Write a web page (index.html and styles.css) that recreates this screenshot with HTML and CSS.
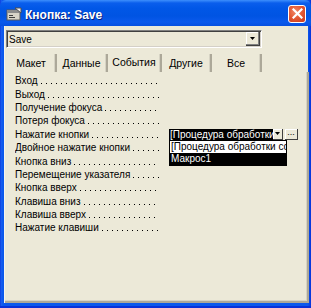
FILE: index.html
```html
<!DOCTYPE html>
<html lang="ru">
<head>
<meta charset="utf-8">
<title>Кнопка: Save</title>
<link rel="stylesheet" href="styles.css">
</head>
<body>
<div class="window">
  <div class="titlebar">
    <svg class="ticon" width="16" height="14" viewBox="0 0 16 14">
      <rect x="1" y="3" width="13" height="10" fill="#d8d4c8" stroke="#5a5a5a" stroke-width="1"/>
      <rect x="1" y="3" width="13" height="3" fill="#8c8c8c"/>
      <rect x="3" y="8" width="4" height="1" fill="#404040"/>
      <rect x="3" y="10" width="6" height="1" fill="#404040"/>
      <path d="M9 1 L15 1 L15 6 Z" fill="#f0f0f0" stroke="#505050" stroke-width="1"/>
    </svg>
    <span class="title">Кнопка: Save</span>
    <div class="close">
      <svg width="11" height="11" viewBox="0 0 11 11"><path d="M1.5 1.5 L9.5 9.5 M9.5 1.5 L1.5 9.5" stroke="#fff" stroke-width="2.2" stroke-linecap="square"/></svg>
    </div>
  </div>
  <div class="client">
    <div class="combo">
      <span class="combo-text">Save</span>
      <span class="combo-btn"><svg width="5" height="3" viewBox="0 0 5 3"><path d="M0 0 H5 L2.5 3 Z" fill="#000"/></svg></span>
    </div>
    <div class="tabs">
      <div class="tab t1">Макет</div>
      <div class="tab t2">Данные</div>
      <div class="tab t3 active">События</div>
      <div class="tab t4">Другие</div>
      <div class="tab t5">Все</div>
    </div>
    <div class="panel">
      <div class="row"><span class="lead"><span class="label">Вход</span><span class="dots"></span></span><span class="value"></span></div>
      <div class="row"><span class="lead"><span class="label">Выход</span><span class="dots"></span></span><span class="value"></span></div>
      <div class="row"><span class="lead"><span class="label">Получение фокуса</span><span class="dots"></span></span><span class="value"></span></div>
      <div class="row"><span class="lead"><span class="label">Потеря фокуса</span><span class="dots"></span></span><span class="value"></span></div>
      <div class="row"><span class="lead"><span class="label">Нажатие кнопки</span><span class="dots"></span></span>
        <span class="value">
          <span class="vcombo">
            <span class="vtext">[Процедура обработки событий]</span>
            <span class="vbtn"><svg width="5" height="3" viewBox="0 0 5 3"><path d="M0 0 H5 L2.5 3 Z" fill="#000"/></svg></span>
          </span>
          <span class="build">...</span>
          <span class="droplist">
            <span class="item">[Процедура обработки событий]</span>
            <span class="item sel">Макрос1</span>
          </span>
        </span>
      </div>
      <div class="row"><span class="lead"><span class="label">Двойное нажатие кнопки</span><span class="dots"></span></span><span class="value"></span></div>
      <div class="row"><span class="lead"><span class="label">Кнопка вниз</span><span class="dots"></span></span><span class="value"></span></div>
      <div class="row"><span class="lead"><span class="label">Перемещение указателя</span><span class="dots"></span></span><span class="value"></span></div>
      <div class="row"><span class="lead"><span class="label">Кнопка вверх</span><span class="dots"></span></span><span class="value"></span></div>
      <div class="row"><span class="lead"><span class="label">Клавиша вниз</span><span class="dots"></span></span><span class="value"></span></div>
      <div class="row"><span class="lead"><span class="label">Клавиша вверх</span><span class="dots"></span></span><span class="value"></span></div>
      <div class="row"><span class="lead"><span class="label">Нажатие клавиши</span><span class="dots"></span></span><span class="value"></span></div>
    </div>
  </div>
</div>
</body>
</html>
```
FILE: styles.css
```css
* { box-sizing: border-box; }
html, body { margin: 0; padding: 0; background: #fff; }
body { font-family: "Liberation Sans", Arial, sans-serif; font-size: 10px; color: #000; }

.window {
  width: 311px;
  height: 308px;
  display: flex;
  flex-direction: column;
  background: linear-gradient(to right, #0831d9 0, #1a5ef0 1px, #0a58ec 3px, #0a58ec calc(100% - 3px), #0831d9 100%);
  padding: 0 3px 5px 4px;
  box-shadow: inset 0 -2px 0 #0831d9;
}

.titlebar {
  height: 26px;
  margin: 0 -3px 0 -4px;
  padding: 0 5px 0 6px;
  display: flex;
  align-items: center;
  background: linear-gradient(#3d8ffc 0, #0a5eec 3px, #0157e7 8px, #0054e3 16px, #0a59ec 22px, #0650e0 26px);
  border-radius: 6px 6px 0 0;
}
.ticon { flex: none; margin-top: 1px; }
.title {
  margin-left: 3px;
  color: #fff;
  font-weight: bold;
  font-size: 12px;
  text-shadow: 1px 1px 0 #0a1e7a;
  flex: 1;
  padding-top: 3px;
}
.close {
  width: 18px;
  height: 18px;
  margin-top: 1px;
  border: 1px solid #fff;
  border-radius: 3px;
  background: radial-gradient(circle at 40% 35%, #f08a6a 0, #e45a35 45%, #c8361a 100%);
  display: flex;
  align-items: center;
  justify-content: center;
}

.client {
  flex: 1;
  background: #ece9d8;
  display: flex;
  flex-direction: column;
  padding-top: 4px;
  border-left: 1px solid #f5f4ee;
}

.combo {
  margin-left: 1px;
  width: 256px;
  height: 18px;
  display: flex;
  align-items: center;
  border-top: 1px solid #808080;
  border-left: 1px solid #808080;
  border-right: 1px solid #fff;
  border-bottom: 1px solid #fff;
  box-shadow: inset 1px 1px 0 #404040, inset -1px -1px 0 #d4d0c8;
}
.combo-text { flex: 1; padding-left: 2px; padding-top: 1px; }
.combo-btn {
  width: 14px;
  height: 14px;
  margin-right: 1px;
  display: flex;
  align-items: center;
  justify-content: center;
  border-right: 1px solid #404040;
  border-bottom: 1px solid #404040;
  box-shadow: inset -1px -1px 0 #808080, inset 1px 1px 0 #fff;
}

.tabs {
  display: flex;
  margin-top: 6px;
  padding-left: 2px;
  height: 18px;
  font-size: 10.5px;
}
.tab {
  height: 18px;
  text-align: center;
  line-height: 15px;
  padding-top: 2px;
  border-right: 2px solid #aca899;
  box-shadow: inset -1px 0 0 #d6d3c4;
}
.tab.active { line-height: 13px; }
.t1 { width: 50px; }
.t2 { width: 51px; }
.t3 { width: 54px; }
.t4 { width: 50px; }
.t5 { width: 50px; }

.panel {
  flex: 1;
  margin-right: -1px;
  padding: 2px 0 0 10px;
  border-right: 2px solid #aca899;
  border-bottom: 2px solid #aca899;
  box-shadow: inset -1px -1px 0 #d6d3c4;
}

.row {
  height: 13.4px;
  display: flex;
  align-items: center;
  white-space: nowrap;
  line-height: 13px;
}
.lead {
  width: 144px;
  flex: none;
  display: flex;
  align-items: flex-end;
  height: 13px;
  overflow: hidden;
}
.label { flex: none; }
.dots {
  flex: 1;
  height: 1px;
  margin: 0 0 3px 3px;
  background: linear-gradient(to right, #000 0 1px, transparent 1px) 0 0 / 5px 1px repeat-x;
}
.value {
  flex: none;
  width: 134px;
  margin-left: 10px;
  position: relative;
  display: flex;
  align-items: center;
  height: 13px;
}

.vcombo {
  display: flex;
  align-items: center;
  width: 114px;
  height: 11px;
}
.vtext {
  width: 104px;
  height: 11px;
  overflow: hidden;
  background: #000;
  color: #fff;
  line-height: 11px;
  padding-left: 1px;
}
.vbtn {
  width: 10px;
  height: 11px;
  display: flex;
  align-items: center;
  justify-content: center;
  background: #ece9d8;
  border-right: 1px solid #404040;
  border-bottom: 1px solid #404040;
  box-shadow: inset 1px 1px 0 #fff;
}
.build {
  margin-left: 2px;
  width: 13px;
  height: 11px;
  font-size: 9px;
  line-height: 7px;
  text-align: center;
  border-right: 1px solid #404040;
  border-bottom: 1px solid #404040;
  box-shadow: inset 1px 1px 0 #fff;
}
.droplist {
  position: absolute;
  left: 0;
  top: 12px;
  width: 118px;
  border: 1px solid #000;
  background: #fff;
  display: flex;
  flex-direction: column;
}
.item {
  height: 12px;
  line-height: 12px;
  padding-left: 1px;
  overflow: hidden;
  white-space: nowrap;
}
.item.sel { background: #000; color: #fff; }
```
